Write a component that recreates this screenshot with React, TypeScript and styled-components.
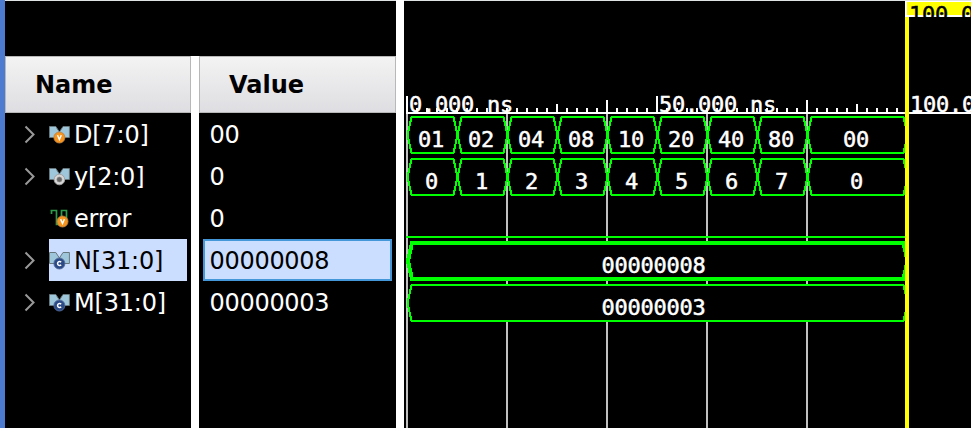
import React from 'react';
import styled, { createGlobalStyle } from 'styled-components';

const Global = createGlobalStyle`
  * { box-sizing: border-box; }
  body { margin: 0; background: #000; overflow: hidden; }
`;

const Window = styled.div`
  width: 971px;
  height: 428px;
  display: flex;
  background: #000;
  border-left: 5px solid #4c7bd0;
  font: 24px/44px "DejaVu Sans", sans-serif;
  color: #fff;
  overflow: hidden;
`;

const Column = styled.section<{ $width: number }>`
  width: ${p => p.$width}px;
  flex: none;
  padding-top: 56px;
  border-top: 1px solid #dfe3e3;
`;

const Header = styled.header<{ $indent: number }>`
  height: 57px;
  margin-top: -1px;
  padding-left: ${p => p.$indent}px;
  border: 1px solid #b8b8b8;
  background: linear-gradient(#f3f3f3, #dedee2);
  color: #000;
  font-weight: 700;
  line-height: 56px;
`;

const Splitter = styled.div<{ $belowHeader?: boolean }>`
  width: 8px;
  flex: none;
  background: ${p =>
    p.$belowHeader
      ? 'linear-gradient(#dfe3e3 1px, #000 1px, #000 56px, #fff 56px)'
      : '#fff'};
`;

const NameRow = styled.div`
  height: 42px;
  display: flex;
  padding: 0 4px 0 17px;
`;

const Expander = styled.div`
  width: 27px;
  flex: none;
  display: flex;
  align-items: center;
`;

const NameCell = styled.div<{ $selected: boolean }>`
  flex: 1;
  display: flex;
  gap: 4px;
  background: ${p => (p.$selected ? '#ccdeff' : 'transparent')};
  color: ${p => (p.$selected ? '#000' : '#fff')};
  letter-spacing: -0.2px;
  svg { flex: none; margin-top: 10px; }
`;

const ValueCell = styled.div<{ $selected: boolean }>`
  height: 42px;
  margin: 0 4px;
  padding-left: 4.5px;
  border: 2px solid ${p => (p.$selected ? '#4497d8' : 'transparent')};
  background: ${p => (p.$selected ? '#ccdeff' : 'transparent')};
  color: ${p => (p.$selected ? '#000' : '#fff')};
  line-height: 40px;
  letter-spacing: -0.3px;
`;

const Wave = styled.svg`
  flex: none;
  display: block;
`;

const WaveText = styled.text`
  font: 22px "DejaVu Sans Mono", monospace;
  letter-spacing: -0.245px;
  fill: #fff;
  stroke: #fff;
  stroke-width: 0.5px;
  white-space: pre;
`;

const MarkerText = styled(WaveText)`
  fill: #000;
  stroke: #000;
`;

type Kind = 'variable' | 'output' | 'constant' | 'bit';

interface Signal {
  name: string;
  value: string;
  kind: Kind;
  selected?: boolean;
  segments: [number, number, string][];
}

const steps = (values: string[], last: string): [number, number, string][] => [
  ...values.map((v, i): [number, number, string] => [i * 50, i * 50 + 50, v]),
  [400, 500, last],
];

const signals: Signal[] = [
  { name: 'D[7:0]', value: '00', kind: 'variable', segments: steps(['01', '02', '04', '08', '10', '20', '40', '80'], '00') },
  { name: 'y[2:0]', value: '0', kind: 'output', segments: steps(['0', '1', '2', '3', '4', '5', '6', '7'], '0') },
  { name: 'error', value: '0', kind: 'bit', segments: [] },
  { name: 'N[31:0]', value: '00000008', kind: 'constant', selected: true, segments: [[0, 500, '00000008']] },
  { name: 'M[31:0]', value: '00000003', kind: 'constant', segments: [[0, 500, '00000003']] },
];

const Badge = ({ kind, x }: { kind: Kind; x: number }) => {
  const y = 14.5;
  if (kind === 'output') {
    return (
      <g>
        <circle cx={x} cy={y} r="5.3" fill="#d6d6d6" stroke="#a0a0a0" />
        <circle cx={x} cy={y} r="2.5" fill="#666" stroke="#888" strokeWidth=".6" />
      </g>
    );
  }
  const constant = kind === 'constant';
  return (
    <g>
      <circle cx={x} cy={y} r="5.5" fill={constant ? '#2b4a88' : '#f7941d'} stroke={constant ? '#536b98' : '#b98243'} strokeWidth=".9" />
      {constant
        ? <path d={`M${x + 1.7} ${y - 1.3}A2 2 0 1 0 ${x + 1.7} ${y + 1.3}`} fill="none" stroke="#fff" strokeWidth="1.5" />
        : <path d={`M${x - 1.9} ${y - 2.4}L${x} ${y + 2}L${x + 1.9} ${y - 2.4}`} fill="none" stroke="#fff" strokeWidth="1.4" />}
    </g>
  );
};

const SignalIcon = ({ kind }: { kind: Kind }) => (
  <svg width="21" height="22" viewBox="0 0 21 22">
    {kind === 'bit' ? (
      <path d="M1.5 3.5H7.5V17.5H12.5V3.5H17.5V15M2.5 4V7" fill="none" stroke="#2e9b4a" strokeWidth="1.7" />
    ) : (
      <path d="M.5 3.5H6.8L10.4 9L14 3.5H20.4V14.5H.5Z" fill="#9fc7db" stroke="#66777e" />
    )}
    <Badge kind={kind} x={kind === 'bit' ? 13.5 : 10.4} />
  </svg>
);

const Chevron = () => (
  <svg width="14" height="20" viewBox="0 0 14 20">
    <path d="M3.5 2.5L11.5 10.5L3.5 18.5" fill="none" stroke="#999" strokeWidth="2" />
  </svg>
);

const ORIGIN = 3;

const Waveform = () => (
  <Wave width="567" height="428" viewBox="0 0 567 428">
    <g shapeRendering="crispEdges">
      {[0, 100, 200, 300, 400].map(x => (
        <rect key={x} x={x + 2} y="114" width="2" height="314" fill="#c0c0c0" />
      ))}
      <rect x="2" y="112" width="565" height="2" fill="#fff" />
      {Array.from({ length: 50 }, (_, i) => {
        const h = i % 25 === 0 ? 16 : i % 10 === 0 ? 12 : i % 5 === 0 ? 8 : 4;
        return <rect key={i} x={2 + i * 10} y={112 - h} width="2" height={h} fill="#fff" />;
      })}
      <rect x="4" y="94" width="106" height="14" fill="#000" />
      <rect x="254" y="94" width="118" height="14" fill="#000" />
      <rect x="2" y="236" width="499" height="2" fill="#0f0" />
      {signals.map((s, row) =>
        s.segments.map(([a, b]) => {
          const top = 117 + row * 42;
          const l = ORIGIN + a + (s.selected ? 1 : 0.5);
          const r = ORIGIN + b + 0.5;
          return (
            <path
              key={`${row}-${a}`}
              d={`M${l + 4} ${top}H${r - 4}L${r} ${top + 18}L${r - 4} ${top + 36}H${l + 4}L${l} ${top + 18}Z`}
              fill="#000"
              stroke="#0f0"
              strokeWidth={s.selected ? 4 : 2}
            />
          );
        }),
      )}
    </g>
    {signals.map((s, row) =>
      s.segments.map(([a, b, label]) => {
        const start = ORIGIN + (a + b) / 2 - 0.2 - label.length * 6.9;
        return (
          <WaveText key={`${row}-${a}`} x={start} y={146.7 + row * 42}>
            {label}
          </WaveText>
        );
      }),
    )}
    <WaveText x="5" y="112">0.000 ns</WaveText>
    <WaveText x="255" y="112">50.000 ns</WaveText>
    <WaveText x="506" y="112">100.000 ns</WaveText>
    <g shapeRendering="crispEdges">
      <rect width="567" height="1" fill="#dfe3e3" />
      <rect x="501" y="1" width="66" height="16" fill="#fff" />
      <rect x="503" y="2" width="64" height="13" fill="#ff0" />
      <rect x="501" y="17" width="4" height="411" fill="#ff0" />
    </g>
    <clipPath id="marker"><rect x="501" y="0" width="66" height="17" /></clipPath>
    <g clipPath="url(#marker)">
      <MarkerText x="505" y="22">100.000 ns</MarkerText>
    </g>
  </Wave>
);

export default function App() {
  return (
    <>
      <Global />
      <Window>
        <Column $width={186}>
          <Header $indent={29}>Name</Header>
          {signals.map(s => (
            <NameRow key={s.name}>
              <Expander>{s.kind !== 'bit' && <Chevron />}</Expander>
              <NameCell $selected={!!s.selected}>
                <SignalIcon kind={s.kind} />
                {s.name}
              </NameCell>
            </NameRow>
          ))}
        </Column>
        <Splitter $belowHeader />
        <Column $width={197}>
          <Header $indent={29}>Value</Header>
          {signals.map(s => (
            <ValueCell key={s.name} $selected={!!s.selected}>{s.value}</ValueCell>
          ))}
        </Column>
        <Splitter />
        <Waveform />
      </Window>
    </>
  );
}
